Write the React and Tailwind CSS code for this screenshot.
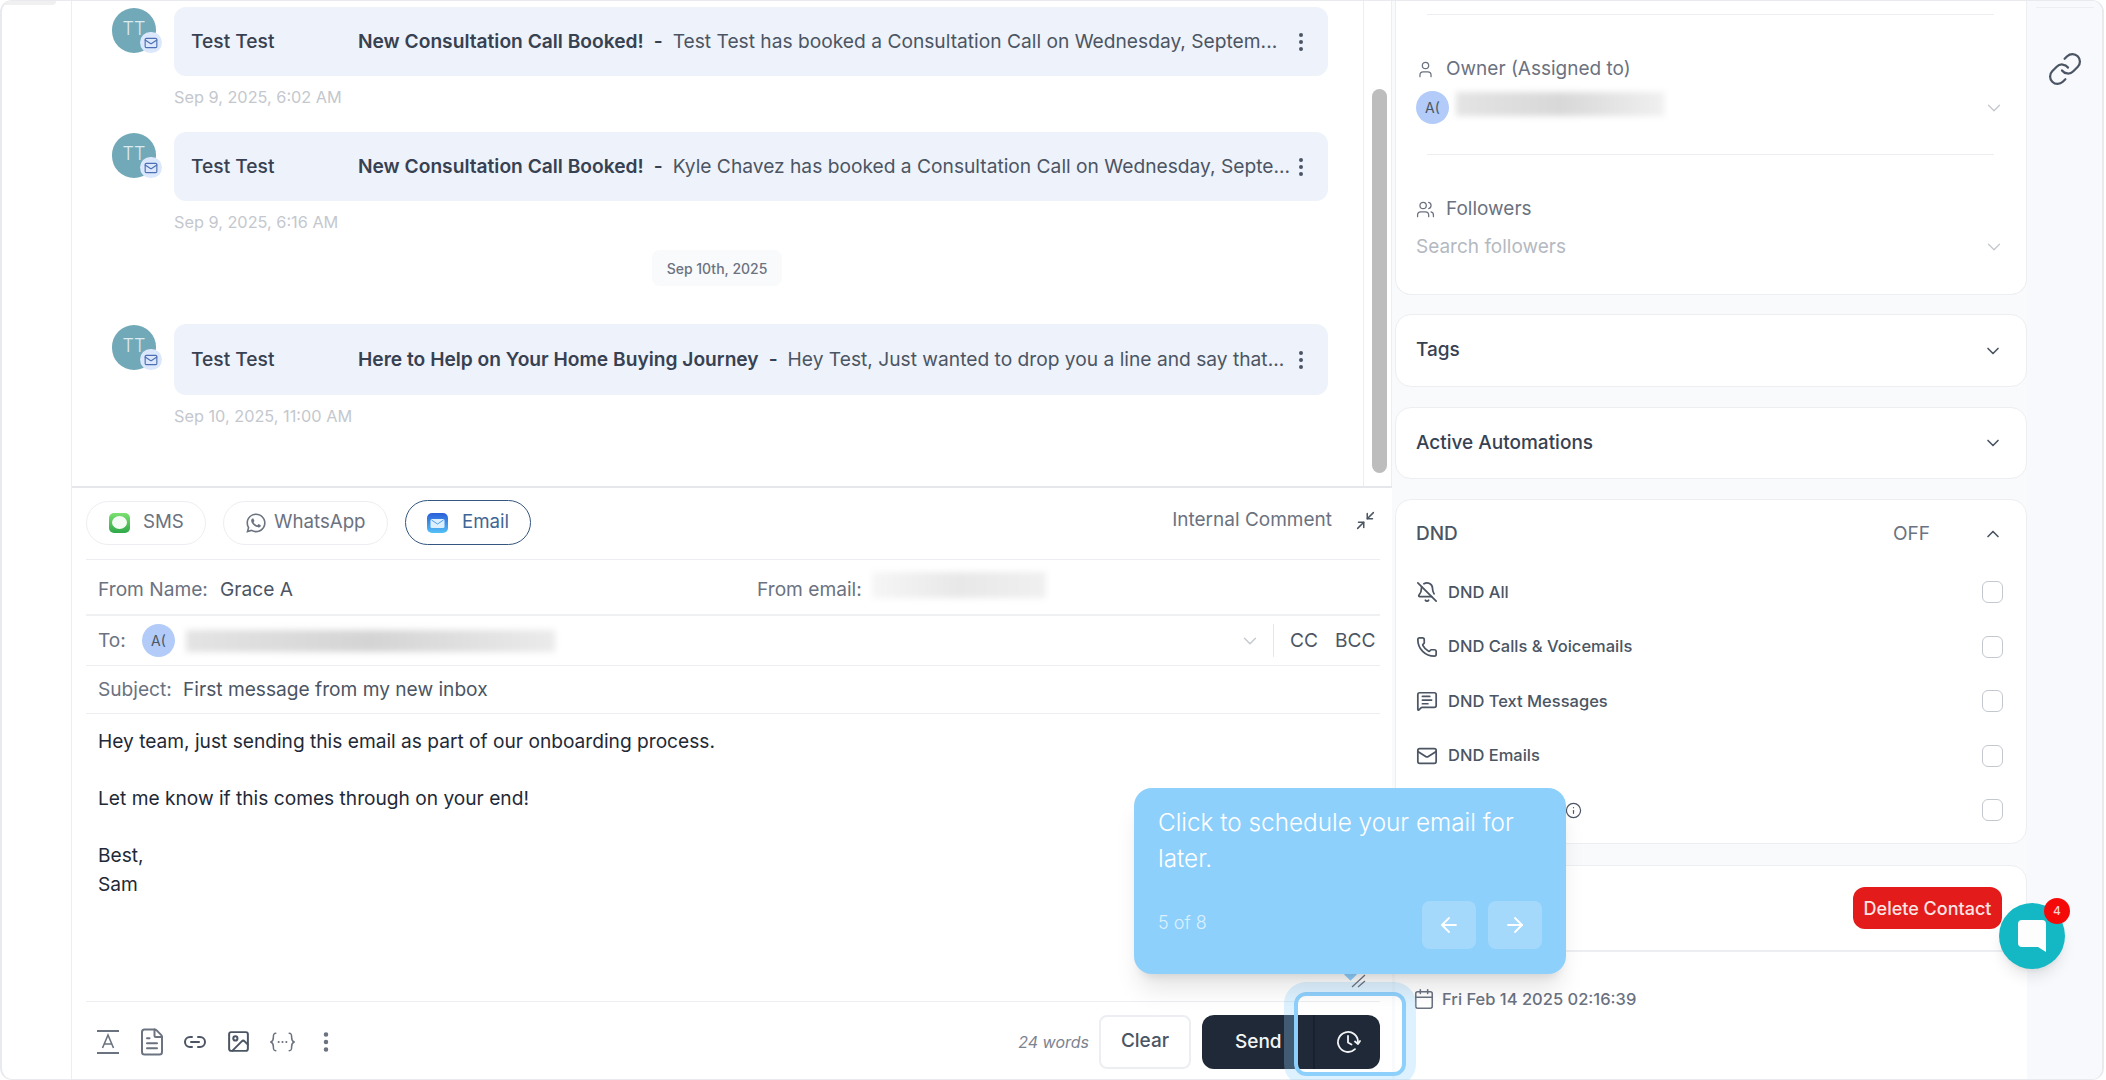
import {
  ArrowLeft,
  ArrowRight,
  BellOff,
  Calendar,
  ChevronDown,
  ChevronUp,
  EllipsisVertical,
  FileText,
  Image,
  Info,
  Link,
  Link2,
  Mail,
  MessageSquareText,
  Minimize2,
  Phone,
  User,
  Users,
} from 'lucide-react';
import { FaWhatsapp } from 'react-icons/fa';

const messages = [
  {
    subject: 'New Consultation Call Booked!',
    preview: 'Test Test has booked a Consultation Call on Wednesday, Septem...',
    time: 'Sep 9, 2025, 6:02 AM',
  },
  {
    subject: 'New Consultation Call Booked!',
    preview: 'Kyle Chavez has booked a Consultation Call on Wednesday, Septe...',
    time: 'Sep 9, 2025, 6:16 AM',
  },
];

const dndRows = [
  { label: 'DND All', icon: BellOff },
  { label: 'DND Calls & Voicemails', icon: Phone },
  { label: 'DND Text Messages', icon: MessageSquareText },
  { label: 'DND Emails', icon: Mail },
];

const MessageRow = ({ subject, preview, time, tall }) => (
  <div>
    <div className="flex gap-[18px]">
      <div className="relative mt-px h-[45px] w-[44px] shrink-0 rounded-full bg-[#72a9b8] pt-[9px] text-center text-[18px] font-light leading-[24px] text-[#dcebef]">
        TT
        <div className="absolute left-[28px] top-[24px] flex h-[21px] w-[22px] items-center justify-center rounded-full bg-[#dbe8fb]">
          <Mail size={14} strokeWidth={2} className="text-[#4f6fb5]" />
        </div>
      </div>
      <div className={`flex w-[1154px] items-center rounded-xl bg-[#eef2fa] pl-[17px] text-[19.200px] text-[#4b5563] ${tall ? 'h-[71px]' : 'h-[69px]'}`}>
        <span className="w-[167px] shrink-0 font-medium text-[#374151]">Test Test</span>
        <span className="shrink-0 font-semibold text-[#374151]">{subject}</span>
        <span className="mx-[10px] shrink-0 font-semibold text-[#374151]">-</span>
        <span className="min-w-0 flex-1 whitespace-nowrap">{preview}</span>
        <EllipsisVertical size={24} className="mr-[15px] shrink-0 text-[#4b5563]" />
      </div>
    </div>
    <div className="ml-[62px] mt-[11px] text-[16.300px] leading-[20px] text-[#c4c8ce]">{time}</div>
  </div>
);

const MessageList = () => (
  <div className="flex h-[485px] w-[1291px] flex-col items-start pl-[40px] pt-[6px]">
    <MessageRow {...messages[0]} />
    <div className="mt-[25px]">
      <MessageRow {...messages[1]} />
    </div>
    <div className="ml-[540px] mt-[18px] flex h-[36px] w-[130px] items-center justify-center rounded-lg bg-[#f9fafb] text-[14px] font-medium text-[#6b7280]">
      Sep 10th, 2025
    </div>
    <div className="mt-[38px]">
      <MessageRow
        tall
        subject="Here to Help on Your Home Buying Journey"
        preview="Hey Test, Just wanted to drop you a line and say that..."
        time="Sep 10, 2025, 11:00 AM"
      />
    </div>
  </div>
);

const SmsIcon = () => (
  <svg width="21" height="20" viewBox="0 0 21 20">
    <defs>
      <linearGradient id="smsGrad" x1="0" y1="0" x2="0" y2="1">
        <stop offset="0" stopColor="#7be06f" />
        <stop offset="1" stopColor="#2fa84a" />
      </linearGradient>
    </defs>
    <rect width="21" height="20" rx="5" fill="url(#smsGrad)" />
    <ellipse cx="10.500" cy="9.500" rx="7.500" ry="6.500" fill="#f4fbf4" />
  </svg>
);

const EmailIcon = () => (
  <svg width="21" height="20" viewBox="0 0 21 20">
    <defs>
      <linearGradient id="emailGrad" x1="0" y1="0" x2="0" y2="1">
        <stop offset="0" stopColor="#2a5fd8" />
        <stop offset="1" stopColor="#54c0f6" />
      </linearGradient>
    </defs>
    <rect width="21" height="20" rx="5" fill="url(#emailGrad)" />
    <rect x="3.500" y="6" width="14" height="9" rx="1.500" fill="#dcefff" />
    <path d="M4.500 7l6 4 6-4" fill="none" stroke="#4f9de8" strokeWidth="1" />
  </svg>
);

const ChannelTabs = () => (
  <div className="flex h-[72px] items-center border-b border-[#eceef1] pb-[2px]">
    <div className="flex h-[44px] w-[120px] items-center rounded-full border border-[#eceef1] pl-[22px] text-[18.700px] text-[#6b7280]">
      <SmsIcon />
      <span className="ml-[13px]">SMS</span>
    </div>
    <div className="ml-[17px] flex h-[44px] w-[165px] items-center rounded-full border border-[#eceef1] pl-[21px] text-[18.700px] text-[#6b7280]">
      <FaWhatsapp size={22} />
      <span className="ml-[7px]">WhatsApp</span>
    </div>
    <div className="ml-[17px] flex h-[45px] w-[126px] items-center rounded-full border border-[#34567f] pl-[21px] text-[18.700px] text-[#3f6696]">
      <EmailIcon />
      <span className="ml-[14px]">Email</span>
    </div>
    <span className="ml-auto mb-[4px] text-[19px] text-[#6b7280]">Internal Comment</span>
    <Minimize2 size={21} strokeWidth={1.7} className="mb-[4px] ml-[23px] mr-[4px] text-[#4b5563]" />
  </div>
);

const AddressRows = () => (
  <div className="text-[19.150px]">
    <div className="flex h-[56px] items-center border-b-2 border-[#eef0f2] pl-[12px] pt-[4px]">
      <span className="w-[122px] text-[#6b7280]">From Name:</span>
      <span className="w-[537px] text-[#4b5563]">Grace A</span>
      <span className="w-[115px] whitespace-nowrap text-[#6b7280]">From email:</span>
      <div className="mb-[9px] h-[26px] w-[174px] bg-linear-to-r from-[#f6f6f6] via-[#e8e8e8] to-[#f0f0f0] blur-[3px]" />
    </div>
    <div className="flex h-[50px] items-center border-b border-[#eceef1] pl-[12px]">
      <span className="w-[44px] text-[#6b7280]">To:</span>
      <div className="flex h-[33px] w-[33px] items-center justify-center rounded-full bg-[#b3cbf8] text-[14px] text-[#4b5563]">A(</div>
      <div className="ml-[11px] h-[22px] w-[369px] bg-linear-to-r from-[#e4e4e4] via-[#d4d4d4] to-[#ebebeb] blur-[3px]" />
      <ChevronDown size={22} strokeWidth={1.4} className="ml-[684px] text-[#c3c7cd]" />
      <div className="ml-[12px] h-[33px] w-px bg-[#e5e7eb]" />
      <span className="ml-[16px] text-[#4b5563]">CC</span>
      <span className="ml-[17px] text-[#4b5563]">BCC</span>
    </div>
    <div className="flex h-[48px] items-center border-b border-[#eceef1] pl-[12px]">
      <span className="w-[85px] text-[#6b7280]">Subject:</span>
      <span className="text-[#4b5563]">First message from my new inbox</span>
    </div>
  </div>
);

const EmailBody = () => (
  <div className="h-[288px] border-b border-[#eceef1] pl-[12px] pt-[13px] text-[19.150px] leading-[28.500px] text-[#1f2937]">
    <p>Hey team, just sending this email as part of our onboarding process.</p>
    <p className="mt-[28.500px]">Let me know if this comes through on your end!</p>
    <p className="mt-[28.500px]">Best,</p>
    <p>Sam</p>
  </div>
);

const TextFormatIcon = () => (
  <svg width="22" height="26" viewBox="0 0 22 26" fill="none" stroke="#6b7280" strokeWidth="2">
    <path d="M0 2h22M0 24h22" />
    <path d="M5.500 19L11 6l5.500 13M7.500 15h7" strokeWidth="1.600" />
  </svg>
);

const BracesIcon = () => (
  <svg width="25" height="22" viewBox="0 0 26 22" fill="none" stroke="#6b7280" strokeWidth="1.600" strokeLinecap="round">
    <path d="M6 2C3.500 2 3.500 3.500 3.500 6s0 4-2.500 5c2.500 1 2.500 2.500 2.500 5s0 4 2.500 4" />
    <path d="M20 2c2.500 0 2.500 1.500 2.500 4s0 4 2.500 5c-2.500 1-2.500 2.500-2.500 5s0 4-2.500 4" />
    <path d="M9 11h.01M13 11h.01M17 11h.01" strokeWidth="2.200" />
  </svg>
);

const ScheduleIcon = () => (
  <svg width="26" height="26" viewBox="0 0 26 26" fill="none" stroke="#f3f4f6" strokeWidth="1.800" strokeLinecap="round" strokeLinejoin="round">
    <path d="M23 13a10 10 0 1 0-3 7.100" />
    <path d="M13 7v6.500l3.500 2" />
    <path d="M20 12.500l3 2.500 2-3" />
  </svg>
);

const ComposerFooter = () => (
  <div className="flex h-[77px] items-center pt-[2px]">
    <div className="ml-[11px]"><TextFormatIcon /></div>
    <FileText size={30} strokeWidth={1.600} className="ml-[18px] text-[#6b7280]" />
    <Link2 size={24} strokeWidth={2} className="ml-[16px] text-[#4b5563]" />
    <Image size={25} strokeWidth={1.900} className="ml-[19px] text-[#4b5563]" />
    <div className="ml-[19px]"><BracesIcon /></div>
    <EllipsisVertical size={26} strokeWidth={2.200} className="ml-[18px] text-[#6b7280]" />
    <span className="ml-auto text-[16px] italic text-[#7b8390]">24 words</span>
    <button className="ml-[10px] h-[54px] w-[92px] rounded-lg border-2 border-[#eceef1] bg-white text-[19px] font-medium text-[#4b5563]">Clear</button>
    <div className="ml-[11px] flex h-[54px] w-[178px] items-center rounded-xl bg-[#1f2937] text-[19px] font-medium text-[#f3f4f6]">
      <span className="w-[113px] border-r-2 border-[#172130] pl-[33px] leading-[54px]">Send</span>
      <div className="flex flex-1 justify-center"><ScheduleIcon /></div>
    </div>
  </div>
);

const Composer = () => (
  <div className="flex flex-1 flex-col border-t-2 border-[#e5e7eb] pl-[14px] pr-[12px]">
    <ChannelTabs />
    <AddressRows />
    <EmailBody />
    <ComposerFooter />
  </div>
);

const SectionCard = ({ title, height }) => (
  <div className={`flex items-center justify-between rounded-2xl border border-[#eceef1] bg-white pl-[20px] pr-[23px] text-[19px] font-medium text-[#374151] ${height}`}>
    {title}
    <ChevronDown size={20} strokeWidth={2} className="text-[#4b5563]" />
  </div>
);

const AssigneeCard = () => (
  <div className="h-[294px] rounded-b-2xl border border-t-0 border-[#eceef1] bg-white pl-[20px] pr-[21px] text-[19px]">
    <div className="mx-[11px] mt-[13px] h-px bg-[#eceef1]" />
    <div className="mt-[42px] flex items-center text-[#6b7280]">
      <User size={19} strokeWidth={1.600} />
      <span className="ml-[11px] leading-[24px]">Owner (Assigned to)</span>
    </div>
    <div className="mt-[10px] flex h-[33px] items-center">
      <div className="flex h-[33px] w-[33px] items-center justify-center rounded-full bg-[#b3cbf8] text-[14px] text-[#4b5563]">A(</div>
      <div className="mb-[8px] ml-[7px] h-[24px] w-[208px] bg-linear-to-r from-[#e4e4e4] via-[#d8d8d8] to-[#f0f0f0] blur-[3px]" />
      <ChevronDown size={22} strokeWidth={1.400} className="ml-auto text-[#c3c7cd]" />
    </div>
    <div className="mx-[11px] mt-[30px] h-px bg-[#eceef1]" />
    <div className="mt-[42px] flex items-center text-[#6b7280]">
      <Users size={19} strokeWidth={1.600} />
      <span className="ml-[11px] leading-[24px]">Followers</span>
    </div>
    <div className="mt-[13px] flex h-[26px] items-center justify-between text-[#b4b9c1]">
      Search followers
      <ChevronDown size={22} strokeWidth={1.400} className="text-[#c3c7cd]" />
    </div>
  </div>
);

const DndCard = () => (
  <div className="h-[345px] rounded-2xl border border-[#eceef1] bg-white pl-[20px] pr-[22px] pt-[22px]">
    <div className="flex h-[24px] items-center text-[19px] font-medium text-[#4b5563]">
      <span className="flex-1">DND</span>
      <span className="font-normal text-[#6b7280]">OFF</span>
      <ChevronUp size={20} strokeWidth={2} className="ml-[53px] mr-px text-[#4b5563]" />
    </div>
    <div className="mt-[36px] flex flex-col gap-[34.500px] pr-[1px]">
      {dndRows.map((row) => {
        const RowIcon = row.icon;
        return (
          <div key={row.label} className="flex h-[20px] items-center text-[16.500px] font-medium text-[#4b5563]">
            <RowIcon size={22} strokeWidth={1.900} />
            <span className="ml-[10px] flex-1">{row.label}</span>
            <div className="h-[22px] w-[21px] rounded-[6px] border border-[#c4c8ce]" />
          </div>
        );
      })}
      <div className="flex h-[20px] items-center">
        <Info size={17} strokeWidth={1.700} className="ml-[149px] text-[#4b5563]" />
        <div className="ml-auto h-[22px] w-[21px] rounded-[6px] border border-[#c4c8ce]" />
      </div>
    </div>
  </div>
);

const RightPanel = () => (
  <div className="flex w-[635px] flex-col bg-[#f9fafb] pl-[3px]">
    <AssigneeCard />
    <div className="mt-[19px]"><SectionCard title="Tags" height="h-[73px]" /></div>
    <div className="mt-[20px]"><SectionCard title="Active Automations" height="h-[72px]" /></div>
    <div className="mt-[20px]"><DndCard /></div>
    <div className="mt-[21px] flex h-[86px] items-center justify-end rounded-t-2xl border border-[#eceef1] bg-white pr-[24px]">
      <button className="h-[42px] w-[149px] rounded-xl bg-[#e31b1b] text-[18px] font-medium text-[#fbe3e3]">Delete Contact</button>
    </div>
    <div className="flex flex-1 items-start border-t border-[#eceef1] bg-white pl-[18px] pt-[36px] text-[16.500px] font-medium text-[#6b7280]">
      <Calendar size={22} strokeWidth={1.700} />
      <span className="ml-[7px] leading-[22px]">Fri Feb 14 2025 02:16:39</span>
    </div>
  </div>
);

// guide popover and highlight sit over the composer
const TourOverlay = () => (
  <>
    <div className="absolute left-[1294px] top-[992px] h-[84px] w-[112px] rounded-xl border-4 border-[#8ed0fc] shadow-[0_0_0_10px_rgba(142,208,252,0.3)]" />
    <svg className="absolute left-[1350px] top-[972px]" width="18" height="18" viewBox="0 0 18 18" fill="none" stroke="#6b7280" strokeWidth="1.200">
      <path d="M2 15L15 3M8 15l7-6" />
    </svg>
    <div className="absolute left-[1346px] top-[970px] h-[9px] w-[9px] rotate-45 bg-[#8ed0fc]" />
    <div className="absolute left-[1134px] top-[788px] h-[186px] w-[432px] rounded-[18px] bg-[#8ed0fc] px-[24px] pt-[16px] text-white shadow-xl">
      <p className="text-[24.300px] font-light leading-[36px]">Click to schedule your email for later.</p>
      <div className="mt-[25px] flex items-center">
        <span className="mb-[6px] flex-1 text-[18px] font-light text-[#dcf0fe]">5 of 8</span>
        <button className="flex h-[48px] w-[54px] items-center justify-center rounded-lg bg-white/20">
          <ArrowLeft size={24} strokeWidth={1.800} />
        </button>
        <button className="ml-[12px] flex h-[48px] w-[54px] items-center justify-center rounded-lg bg-white/20">
          <ArrowRight size={24} strokeWidth={1.800} />
        </button>
      </div>
    </div>
  </>
);

const ChatWidget = () => (
  <>
    <div className="absolute left-[1999px] top-[903px] flex h-[66px] w-[66px] items-center justify-center rounded-full bg-[#14b8c4] shadow-lg">
      <svg width="30" height="34" viewBox="0 0 30 34">
        <path d="M5 1h20a4 4 0 0 1 4 4v28l-8-5H5a4 4 0 0 1-4-4V5a4 4 0 0 1 4-4z" fill="#fdfdfd" />
      </svg>
    </div>
    <div className="absolute left-[2044px] top-[898px] flex h-[26px] w-[26px] items-center justify-center rounded-full bg-[#f50a0a] text-[12px] font-medium text-[#f8d0d0]">4</div>
  </>
);

const App = () => {
  return (
    <div className="relative h-[1080px] w-[2106px] overflow-hidden bg-white font-[Inter,sans-serif]">
      <div className="flex h-[1080px] w-[2104px] overflow-hidden rounded-xl border-x-2 border-y border-[#e8eaee]">
        <div className="relative w-[70px] shrink-0 border-r border-[#eceef1]">
          <div className="h-[4px] w-[54px] rounded-b-lg bg-[#f0f0f0]" />
        </div>
        <div className="flex w-[1320px] shrink-0 flex-col">
          <div className="flex h-[485px]">
            <MessageList />
            <div className="w-[29px] border-x border-[#eceef1] pl-[8px] pt-[88px]">
              <div className="h-[384px] w-[15px] rounded-full bg-[#bdbdbd]" />
            </div>
          </div>
          <Composer />
        </div>
        <RightPanel />
        <div className="flex flex-1 flex-col items-center bg-[#f7f9fc] pt-[6px]">
          <div className="h-px w-[58px] bg-[#eceef1]" />
          <Link size={36} strokeWidth={1.500} className="mt-[43px] text-[#4b5563]" />
        </div>
      </div>
      <TourOverlay />
      <ChatWidget />
    </div>
  );
};

export default App;
